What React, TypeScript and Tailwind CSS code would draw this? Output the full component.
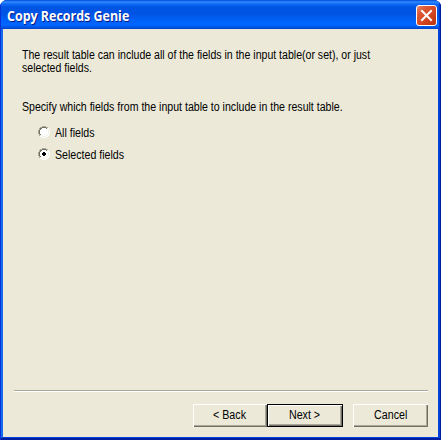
import type { ReactNode } from 'react';

function Radio({ checked, children }: { checked?: boolean; children: ReactNode }) {
  return (
    <label className="flex h-[13px] items-start">
      <svg width="12" height="12" viewBox="0 0 12 12" className="mr-[5px] shrink-0" shapeRendering="crispEdges">
        <path fill="#fff" d="M4 1h4v1h2v2h1v4h-1v2h-2v1H4v-1H2V8H1V4h1V2h2z" />
        <path fill="#aca899" d="M4 0h4v1H4zM2 1h2v1H2zM8 1h2v1H8zM1 2h1v2H1zM0 4h1v4H0zM1 8h1v2H1z" />
        <path fill="#716f64" d="M4 1h4v1H4zM2 2h2v1H2zM8 2h1v1H8zM2 3h1v1H2zM1 4h1v4H1zM2 8h1v1H2z" />
        <path fill="#f1efe2" d="M9 3h1v1H9zM10 4h1v4h-1zM9 8h1v1H9zM8 9h1v1H8zM4 10h4v1H4zM2 9h2v1H2z" />
        <path fill="#fff" d="M10 2h1v2h-1zM11 4h1v4h-1zM10 8h1v2h-1zM8 10h2v1H8zM4 11h4v1H4zM2 10h2v1H2z" />
        {checked && <path fill="#000" d="M5 4h2v1h1v2H7v1H5V7H4V5h1z" />}
      </svg>
      <span className="mt-px origin-left scale-x-[0.885] whitespace-nowrap">{children}</span>
    </label>
  );
}

function Button({ primary, className, children }: { primary?: boolean; className: string; children: ReactNode }) {
  return (
    <button
      className={`flex h-[23px] items-center justify-center bg-[#ece9d8] ${
        primary
          ? 'border border-black shadow-[inset_1px_1px_#fff,inset_-1px_-1px_#716f64,inset_-2px_-2px_#aca899]'
          : 'shadow-[inset_1px_1px_#fff,inset_-1px_-1px_#716f64,inset_-2px_-2px_#aca899]'
      } ${className}`}
    >
      <span className="scale-x-[0.89] whitespace-nowrap">{children}</span>
    </button>
  );
}

export default function App() {
  return (
    <div className="h-[440px] w-[441px] overflow-hidden bg-white">
      <div className="flex h-full w-full flex-col overflow-hidden rounded-t-[7px] bg-[#001ea0]">
        <header className="flex h-[29px] shrink-0 items-start justify-between bg-[linear-gradient(180deg,#0048d8_0px,#2f8cff_2px,#1268f4_4px,#0054e3_7px,#0054e3_14px,#0062fa_21px,#0066ff_25px,#0058e8_27px,#0040c8_29px)] pl-[7px] pr-[4px] shadow-[inset_1px_0_#0831d9,inset_-1px_0_#001ea0,inset_-2px_0_#0038c8]">
          <h1 className="mt-[8px] origin-left scale-x-[0.89] whitespace-nowrap font-['Open_Sans','Noto_Sans',sans-serif] text-[14px] font-bold leading-[16px] text-white [text-shadow:1px_1px_#0a1883]">
            Copy Records Genie
          </h1>
          <button aria-label="Close" className="mt-[5px] h-[21px] w-[21px] shrink-0 rounded-[3px] border border-white bg-[linear-gradient(135deg,#e8896c_0%,#dc5a38_25%,#d2431c_65%,#b83210_100%)]">
            <svg width="19" height="19" viewBox="0 0 19 19">
              <path d="M5 5l9 9M14 5l-9 9" stroke="#fff" strokeWidth="2" strokeLinecap="square" />
            </svg>
          </button>
        </header>
        <div className="flex flex-1 border-l border-l-[#0831d9]">
          <main className="mb-[2px] mr-px flex flex-1 flex-col border-x-2 border-b border-b-[#0441d8] border-l-[#166aee] border-r-[#0441d8] bg-[#ece9d8] pl-[11px] pr-[10px] font-['Liberation_Sans',Arial,sans-serif] text-[12px] leading-[13px] text-black">
            <div className="pl-[8px] pt-[20px]">
              <p className="origin-left scale-x-[0.88] whitespace-nowrap">
                The result table can include all of the fields in the input table(or set), or just
                <br />
                selected fields.
              </p>
              <p className="mt-[26px] origin-left scale-x-[0.882] whitespace-nowrap">
                Specify which fields from the input table to include in the result table.
              </p>
              <div className="mt-[12px] flex flex-col gap-[9px] pl-[16px]">
                <Radio>All fields</Radio>
                <Radio checked>Selected fields</Radio>
              </div>
            </div>
            <div className="mt-auto h-[2px] border-b border-t border-b-white border-t-[#aca899]" />
            <footer className="mb-[10px] mt-[12px] flex justify-end">
              <Button className="w-[74px]">&lt; Back</Button>
              <Button primary className="w-[76px]">Next &gt;</Button>
              <Button className="ml-[10px] w-[75px]">Cancel</Button>
            </footer>
          </main>
        </div>
      </div>
    </div>
  );
}
